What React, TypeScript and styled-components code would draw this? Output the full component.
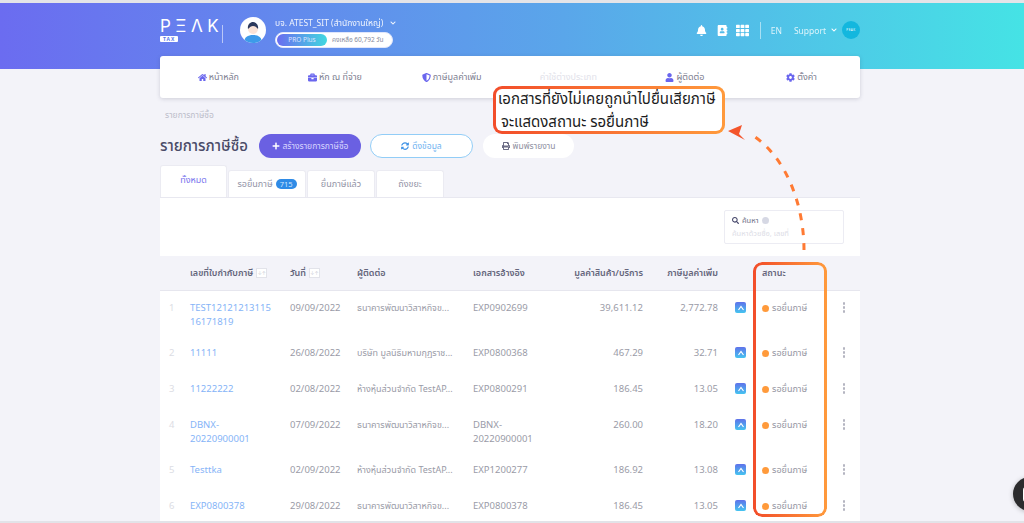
import React from "react";
import styled, { createGlobalStyle } from "styled-components";
import { FaHome, FaBriefcase, FaShieldAlt, FaUser, FaCog, FaPlus, FaSyncAlt, FaPrint, FaBell, FaAddressBook, FaTh, FaSearch, FaChevronDown } from "react-icons/fa";

const Global = createGlobalStyle`
  html, body { margin: 0; padding: 0; background: #fff; }
  body { font-family: "Noto Sans", "Noto Sans Thai", "Inter", sans-serif; }
  * { box-sizing: border-box; }
`;
const Page = styled.div`
  position: relative; width: 1024px; height: 523px; overflow: hidden; background: #f3f3f9;
  border-top: 3px solid #e4e4e8; border-bottom: 2px solid #e2e3e8;
`;
const Header = styled.header`
  height: 66px; background: linear-gradient(90deg, #6b6cf0 0%, #5aa6ea 55%, #45e3e5 100%);
  display: flex; justify-content: space-between; padding: 0 164px 0 160px; color: #fff;
`;
const Left = styled.div`display: flex; align-items: flex-start; padding-top: 13px;`;
const LogoBox = styled.div`width: 54px; display: flex; flex-direction: column; align-items: flex-start; padding-top: 1px;`;
const LogoWord = styled.div`font-size: 17px; line-height: 18px; letter-spacing: 4.5px; font-weight: 400; white-space: nowrap; font-family: "Inter", sans-serif;`;
const TaxBadge = styled.div`background: #fff; color: #5a78ea; font-size: 5px; font-weight: 700; line-height: 6px; height: 6px; padding: 0 3px; letter-spacing: 1px; border-radius: 1px; margin-top: 1px;`;
const Sep = styled.div`width: 1px; height: 18px; background: rgba(255,255,255,.55); margin: 9px 17px 0 8px;`;
const Avatar = styled.div`width: 26px; height: 26px; border-radius: 50%; background: #fff; margin: 1px 9px 0 0; overflow: hidden; display: flex; align-items: flex-end; justify-content: center;`;
const Company = styled.div`display: flex; flex-direction: column; gap: 3px;`;
const CompanyName = styled.div`font-size: 8.5px; line-height: 13px; white-space: nowrap; display: flex; align-items: center; gap: 7px; opacity: .9;`;
const PlanPill = styled.div`width: 118px; height: 16px; background: #fff; border-radius: 8px; display: flex; align-items: center; padding: 1px; border: 1px solid #dfe6fb;`;
const PlanTag = styled.div`width: 50px; height: 12px; border-radius: 6px; background: linear-gradient(90deg, #6a6cf0, #41d8e0); color: #dfe3ff; font-size: 6.5px; line-height: 12px; text-align: center;`;
const PlanLeft = styled.div`font-size: 6.5px; color: #868a9c; margin-left: 5px; white-space: nowrap;`;
const Right = styled.div`display: flex; align-items: center; height: 54px;`;
const HeadIcon = styled.span<{ $gap: number }>`display: flex; margin-right: ${p => p.$gap}px;`;
const RightSep = styled.div`width: 1px; height: 17px; background: rgba(255,255,255,.5); margin: 0 10px 0 11px;`;
const HeadLink = styled.span<{ $gap: number }>`font-size: 8.5px; margin-right: ${p => p.$gap}px; opacity: .8;`;
const Peak = styled.div`width: 18px; height: 18px; border-radius: 50%; background: #13b7de; font-size: 3px; letter-spacing: .5px; display: flex; align-items: center; justify-content: center; margin-left: 5px;`;

const Nav = styled.nav`
  margin: -13px 164px 0 160px; height: 42px; background: #fff; border-radius: 3px;
  box-shadow: 0 1px 4px rgba(60,60,90,.2); display: grid; grid-template-columns: repeat(6, 1fr); align-items: center;
`;
const NavItem = styled.div<{ $faded?: boolean }>`
  display: flex; justify-content: center; align-items: center; gap: 2px; font-size: 9px; white-space: nowrap;
  color: ${p => (p.$faded ? "#e2e2ea" : "#7d7e90")};
  svg { color: #6a66ee; font-size: 9px; }
`;
const Main = styled.main`margin: 0 164px 0 160px;`;
const Crumb = styled.div`font-size: 8.5px; line-height: 12px; color: #bcbdca; padding: 11px 0 0 5px;`;
const TitleRow = styled.div`display: flex; align-items: center; margin-top: 13px; height: 24px;`;
const Title = styled.h1`margin: 0 12px 0 0; font-size: 15px; font-weight: 500; color: #4a4b68; width: 87px; white-space: nowrap;`;
const Btn = styled.button<{ $kind: "primary" | "outline" | "plain"; $w: number }>`
  width: ${p => p.$w}px; height: 24px; border-radius: 12px; font: inherit; font-size: 8.5px; padding: 0; margin-right: ${p => (p.$kind === "outline" ? 10 : 9)}px;
  display: flex; align-items: center; justify-content: center; gap: 3px; white-space: nowrap;
  background: ${p => (p.$kind === "primary" ? "#6a60e2" : "#fff")};
  color: ${p => (p.$kind === "primary" ? "#d9d6ff" : p.$kind === "outline" ? "#6fb2f0" : "#8e8fa0")};
  border: ${p => (p.$kind === "outline" ? "1px solid #92cdf7" : "none")};
  svg { font-size: 8px; color: ${p => (p.$kind === "primary" ? "#fff" : p.$kind === "outline" ? "#3e92e6" : "#6c6d85")}; }
`;
const Tabs = styled.div`display: flex; align-items: flex-end; height: 32px; margin-top: 7px; gap: 1px;`;
const Tab = styled.div<{ $active?: boolean; $w: number }>`
  width: ${p => p.$w}px; height: ${p => (p.$active ? 32 : 27)}px; background: #fff; border-radius: 3px 3px 0 0;
  border: 1px solid #ebebf2; border-bottom: none; display: flex; align-items: center; justify-content: center; gap: 3px;
  font-size: 9px; white-space: nowrap; color: ${p => (p.$active ? "#7a76ee" : "#9293a6")};
  padding-bottom: ${p => (p.$active ? 3 : 0)}px;
`;
const Count = styled.span`background: #2f8be6; color: #cfe6ff; font-size: 7.5px; line-height: 10px; border-radius: 5px; padding: 0 4px;`;
const Card = styled.section`background: #fff; border-top: 1px solid #e8e8f0; height: 324px; overflow: hidden;`;
const SearchRow = styled.div`height: 58px; display: flex; justify-content: flex-end; padding: 12px 16px 0 0;`;
const SearchBox = styled.div`width: 120px; height: 34px; border: 1px solid #ececf3; border-radius: 2px; padding: 3px 7px; display: flex; flex-direction: column;`;
const SearchLabel = styled.div`font-size: 7.5px; line-height: 13px; color: #6d6e86; display: flex; align-items: center; gap: 3px; svg { font-size: 7px; color: #45466a; }`;
const Help = styled.span`width: 7px; height: 7px; border-radius: 50%; background: #d6d8e4;`;
const SearchHint = styled.div`font-size: 7.5px; line-height: 12px; color: #dcdde6; white-space: nowrap;`;

const COLS = "30px 100px 67px 116px 70px 100px 75px 44px 72px 20px 6px";
const HeadRow = styled.div`
  height: 35px; background: #f3f3f9; border-bottom: 1px solid #e6e6ee; display: grid; grid-template-columns: ${COLS}; align-items: center;
  font-size: 9px; font-weight: 600; color: #65667c; white-space: nowrap;
`;
const HeadCell = styled.div<{ $end?: boolean }>`display: flex; align-items: center; gap: 3px; justify-content: ${p => (p.$end ? "flex-end" : "flex-start")};`;
const SortBox = styled.span`width: 11px; height: 10px; border: 1px solid #e2e3ea; color: #cfd0da; font-size: 5px; line-height: 8px; text-align: center; font-weight: 400; background: #fff;`;
const Row = styled.div<{ $h: number; $top: number }>`
  height: ${p => p.$h}px; padding-top: ${p => p.$top}px; display: grid; grid-template-columns: ${COLS}; align-items: start;
  font-size: 9.5px; line-height: 14px; color: #9a9ba7;
`;
const Idx = styled.div`color: #dcdde4; padding-left: 9px;`;
const DocLink = styled.div`color: #86b4f7; padding-right: 18px; overflow-wrap: anywhere;`;
const Contact = styled.div`white-space: nowrap; font-size: 9px;`;
const Ref = styled.div`overflow-wrap: anywhere; padding-right: 8px; min-width: 0;`;
const Num = styled.div`text-align: right;`;
const AppCell = styled.div`padding: 1px 0 0 17px; display: flex;`;
const AppBadge = styled.span`width: 11px; height: 11px; border-radius: 2px; background: linear-gradient(180deg, #5f72ea, #45c4f0); display: flex; align-items: center; justify-content: center;`;
const Status = styled.div`display: flex; align-items: center; gap: 3px; white-space: nowrap; color: #94959f; font-size: 9px;`;
const Dot = styled.span`width: 7px; height: 7px; border-radius: 50%; background: #ff9a3b;`;
const Kebab = styled.div`display: flex; flex-direction: column; align-items: center; gap: 1.5px; margin-top: 1px;`;
const KebabDot = styled.span`width: 2.5px; height: 2.5px; border-radius: 50%; background: #b4b5c1;`;

const Callout = styled.div`
  position: absolute; left: 493px; top: 83px; width: 232px; height: 48px; border-radius: 9px; padding: 3px;
  background: linear-gradient(90deg, #f24d2a, #ff9a3c);
`;
const CalloutBody = styled.div`
  width: 100%; height: 100%; background: #fff; border-radius: 6px; color: #1c1c22; font-size: 15px; line-height: 23px; padding-left: 2px; white-space: nowrap;
  display: flex; flex-direction: column; justify-content: center;
`;
const CalloutLine = styled.div<{ $pad?: boolean }>`flex: none; padding-left: ${p => (p.$pad ? 3 : 0)}px;`;
const Highlight = styled.div`
  position: absolute; left: 753px; top: 259px; width: 74px; height: 255px; border-radius: 9px; padding: 3px;
  background: linear-gradient(90deg, #f24d2a, #ff9a3c);
  -webkit-mask: linear-gradient(#000 0 0) content-box, linear-gradient(#000 0 0);
  -webkit-mask-composite: xor; mask-composite: exclude;
`;
const ArrowLayer = styled.svg`position: absolute; left: 720px; top: 115px; pointer-events: none;`;
const Chat = styled.div`
  position: absolute; left: 1013px; top: 474px; width: 34px; height: 34px; border-radius: 50%; background: #2b2b2d;
  box-shadow: 0 1px 5px rgba(0,0,0,.25); display: flex; align-items: center; padding-left: 10px;
`;
const ChatMark = styled.span`width: 12px; height: 15px; background: #fff; border-radius: 3px;`;

const st = "รอยื่นภาษี";
const bank = "ธนาคารพัฒนาวิสาหกิจข...";
const partner = "ห้างหุ้นส่วนจำกัด TestAP...";
const rows = [
  { i: 1, h: 43, t: 10, doc: "TEST1212121311516171819", d: "09/09/2022", c: bank, r: "EXP0902699", v: "39,611.12", x: "2,772.78" },
  { i: 2, h: 36, t: 12, doc: "11111", d: "26/08/2022", c: "บริษัท มูลนิธิมหามกุฏราช...", r: "EXP0800368", v: "467.29", x: "32.71" },
  { i: 3, h: 36, t: 12, doc: "11222222", d: "02/08/2022", c: partner, r: "EXP0800291", v: "186.45", x: "13.05" },
  { i: 4, h: 45, t: 12, doc: "DBNX-20220900001", d: "07/09/2022", c: bank, r: "DBNX-20220900001", v: "260.00", x: "18.20" },
  { i: 5, h: 36, t: 12, doc: "Testtka", d: "02/09/2022", c: partner, r: "EXP1200277", v: "186.92", x: "13.08" },
  { i: 6, h: 36, t: 12, doc: "EXP0800378", d: "29/08/2022", c: bank, r: "EXP0800378", v: "186.45", x: "13.05" },
];
const navs: [React.ReactNode, string, boolean?][] = [
  [<FaHome />, "หน้าหลัก"],
  [<FaBriefcase />, "หัก ณ ที่จ่าย"],
  [<FaShieldAlt />, "ภาษีมูลค่าเพิ่ม"],
  [null, "ค่าใช้ต่างประเภท", true],
  [<FaUser />, "ผู้ติดต่อ"],
  [<FaCog />, "ตั้งค่า"],
];

export default function App() {
  return (
    <Page>
      <Global />
      <Header>
        <Left>
          <LogoBox>
            <LogoWord>PΞΛK</LogoWord>
            <TaxBadge>TAX</TaxBadge>
          </LogoBox>
          <Sep />
          <Avatar>
            <svg width="22" height="24" viewBox="0 0 22 24">
              <path d="M2 24c0-6 4-8 9-8s9 2 9 8z" fill="#3d9be9" />
              <circle cx="11" cy="10" r="5" fill="#fbe3d6" />
              <path d="M6 10c-1-5 3-7 5-7s6 2 5 7c-2-2-3-3-5-3s-3 1-5 3z" fill="#2d3a5c" />
            </svg>
          </Avatar>
          <Company>
            <CompanyName>บจ. ATEST_SIT (สำนักงานใหญ่) <FaChevronDown size={6} /></CompanyName>
            <PlanPill>
              <PlanTag>PRO Plus</PlanTag>
              <PlanLeft>คงเหลือ 60,792 วัน</PlanLeft>
            </PlanPill>
          </Company>
        </Left>
        <Right>
          <HeadIcon $gap={10}><FaBell size={11} /></HeadIcon>
          <HeadIcon $gap={8}><FaAddressBook size={11} /></HeadIcon>
          <HeadIcon $gap={0}><FaTh size={13} /></HeadIcon>
          <RightSep />
          <HeadLink $gap={12}>EN</HeadLink>
          <HeadLink $gap={5}>Support</HeadLink>
          <FaChevronDown size={6} />
          <Peak>PEAK</Peak>
        </Right>
      </Header>
      <Nav>
        {navs.map(([ic, t, f]) => (
          <NavItem key={t} $faded={f}>{ic}{t}</NavItem>
        ))}
      </Nav>
      <Main>
        <Crumb>รายการภาษีซื้อ</Crumb>
        <TitleRow>
          <Title>รายการภาษีซื้อ</Title>
          <Btn $kind="primary" $w={102}><FaPlus />สร้างรายการภาษีซื้อ</Btn>
          <Btn $kind="outline" $w={103}><FaSyncAlt />ดึงข้อมูล</Btn>
          <Btn $kind="plain" $w={91}><FaPrint />พิมพ์รายงาน</Btn>
        </TitleRow>
        <Tabs>
          <Tab $active $w={67}>ทั้งหมด</Tab>
          <Tab $w={78}>รอยื่นภาษี <Count>715</Count></Tab>
          <Tab $w={68}>ยื่นภาษีแล้ว</Tab>
          <Tab $w={68}>ถังขยะ</Tab>
        </Tabs>
        <Card>
          <SearchRow>
            <SearchBox>
              <SearchLabel><FaSearch />ค้นหา<Help /></SearchLabel>
              <SearchHint>ค้นหาด้วยชื่อ, เลขที่</SearchHint>
            </SearchBox>
          </SearchRow>
          <HeadRow>
            <div />
            <HeadCell>เลขที่ใบกำกับภาษี<SortBox>↓↑</SortBox></HeadCell>
            <HeadCell>วันที่<SortBox>↓↑</SortBox></HeadCell>
            <HeadCell>ผู้ติดต่อ</HeadCell>
            <HeadCell>เอกสารอ้างอิง</HeadCell>
            <HeadCell $end>มูลค่าสินค้า/บริการ</HeadCell>
            <HeadCell $end>ภาษีมูลค่าเพิ่ม</HeadCell>
            <div />
            <HeadCell>สถานะ</HeadCell>
            <div />
            <div />
          </HeadRow>
          {rows.map(r => (
            <Row key={r.i} $h={r.h} $top={r.t}>
              <Idx>{r.i}</Idx>
              <DocLink>{r.doc}</DocLink>
              <div>{r.d}</div>
              <Contact>{r.c}</Contact>
              <Ref>{r.r}</Ref>
              <Num>{r.v}</Num>
              <Num>{r.x}</Num>
              <AppCell>
                <AppBadge>
                  <svg width="8" height="8" viewBox="0 0 8 8"><path d="M1.5 6 4 2.5 6.5 6" fill="none" stroke="#fff" strokeWidth="1.2" /></svg>
                </AppBadge>
              </AppCell>
              <Status><Dot />{st}</Status>
              <Kebab><KebabDot /><KebabDot /><KebabDot /></Kebab>
              <div />
            </Row>
          ))}
        </Card>
      </Main>
      <Callout>
        <CalloutBody>
          <CalloutLine>เอกสารที่ยังไม่เคยถูกนำไปยื่นเสียภาษี</CalloutLine>
          <CalloutLine $pad>จะแสดงสถานะ รอยื่นภาษี</CalloutLine>
        </CalloutBody>
      </Callout>
      <Highlight />
      <ArrowLayer width="100" height="140" viewBox="0 0 100 140">
        <path d="M84 132C84 90 68 40 32 17" fill="none" stroke="#ff7a33" strokeWidth="3" strokeDasharray="7 8" />
        <path d="M8 13 22 7 19 16 25 22z" fill="#f4552c" />
      </ArrowLayer>
      <Chat><ChatMark /></Chat>
    </Page>
  );
}
